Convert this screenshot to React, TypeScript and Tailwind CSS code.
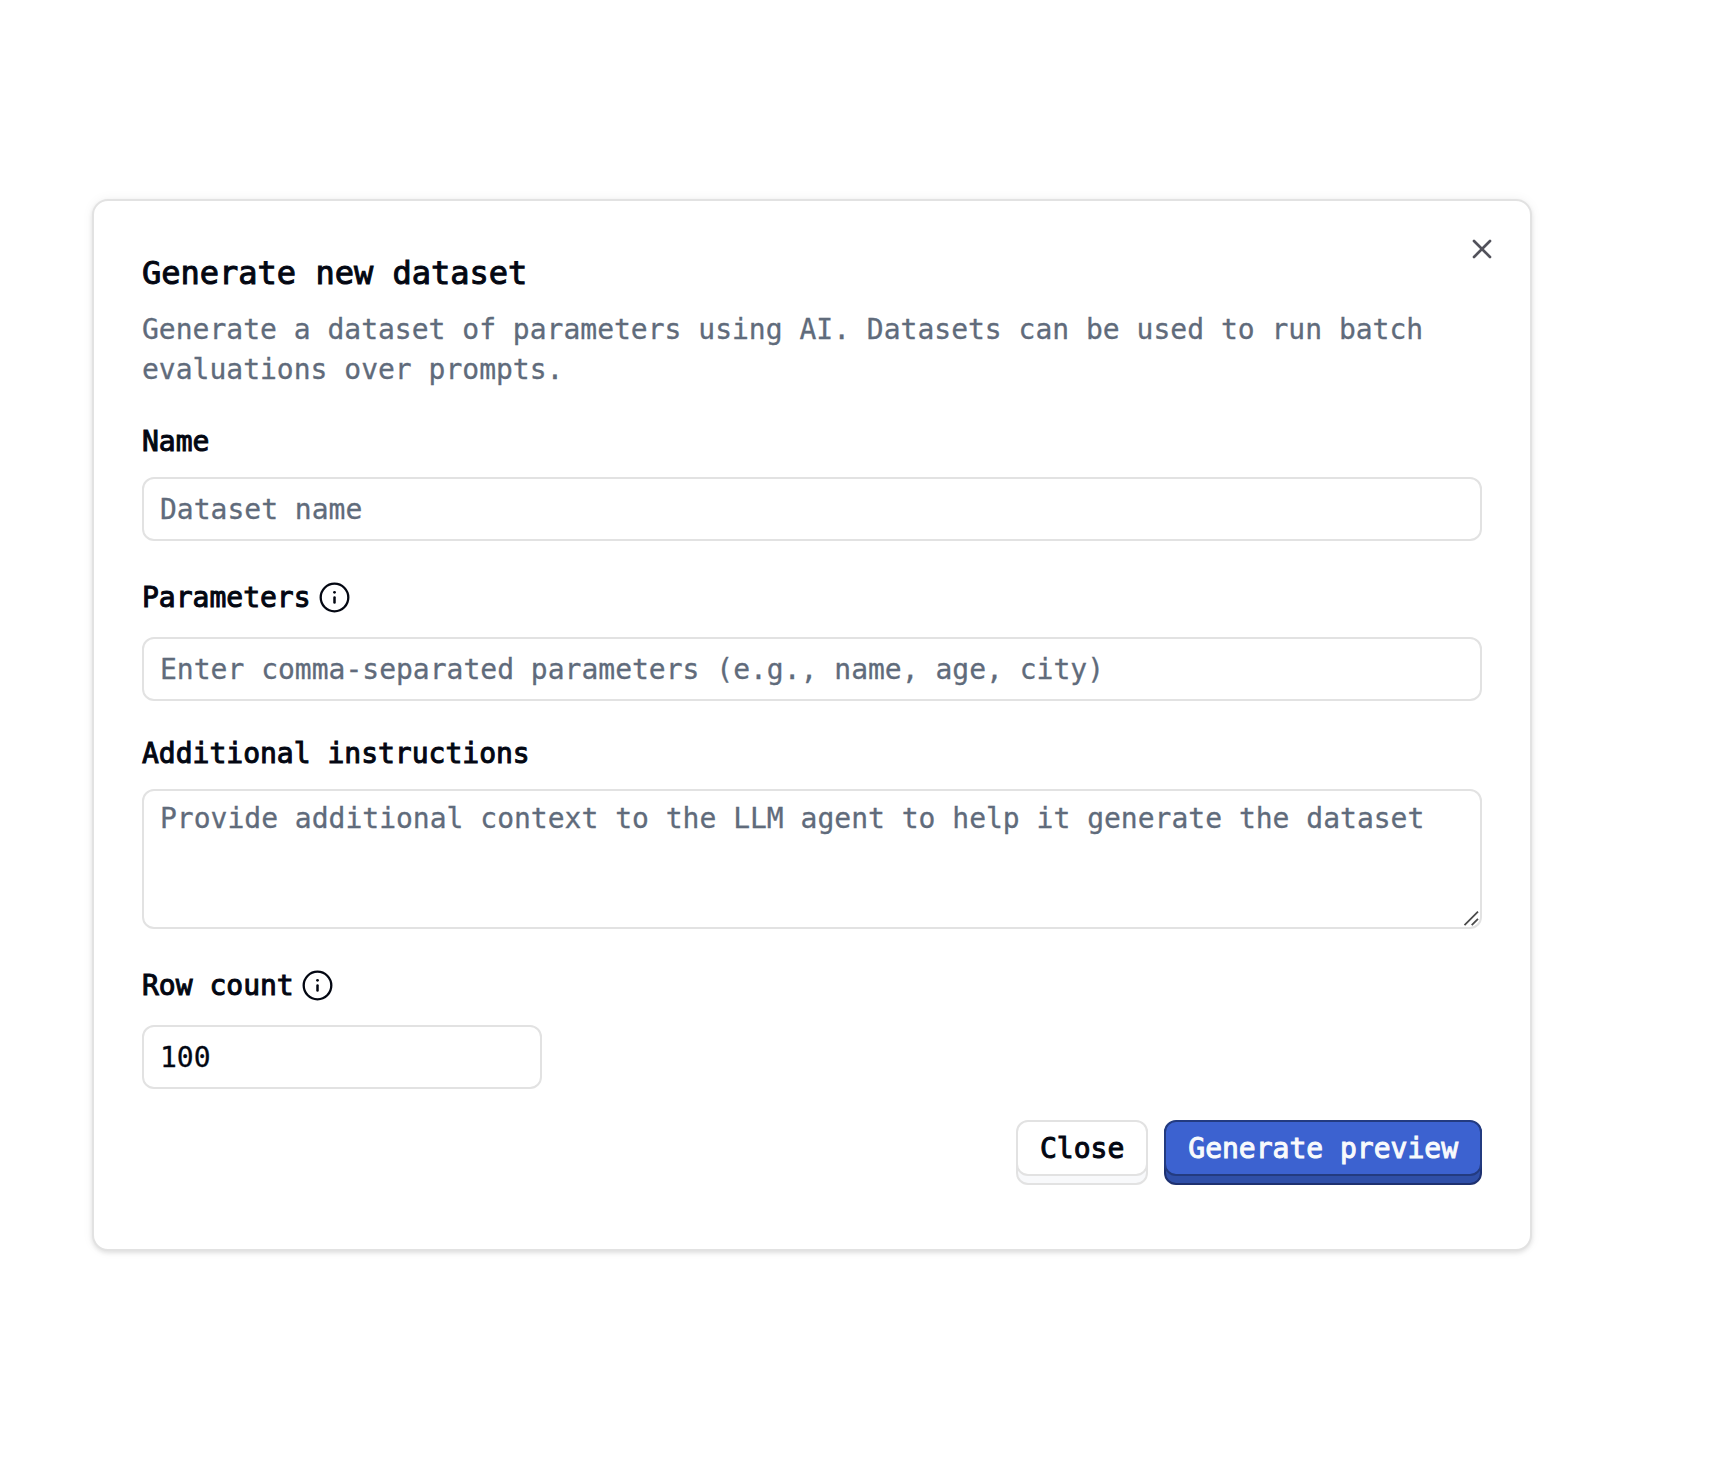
import type { ReactNode } from "react";
import { X } from "lucide-react";

const fieldClass =
  "block w-full rounded-xl border-2 border-[#e2e2e2] bg-white px-4 text-[28px] text-[#030712] placeholder:text-[#606b7b] placeholder:opacity-100 outline-none";

function InfoIcon() {
  return (
    <svg viewBox="0 0 32 32" className="h-8 w-8" fill="none" aria-hidden="true">
      <circle cx="15.5" cy="16.5" r="13.8" stroke="currentColor" strokeWidth="2.3" />
      <circle cx="15.5" cy="11.3" r="1.4" fill="currentColor" />
      <path d="M15.5 16.5V21.4" stroke="currentColor" strokeWidth="2.5" strokeLinecap="round" />
    </svg>
  );
}

function Label({ htmlFor, info, children }: { htmlFor: string; info?: boolean; children: ReactNode }) {
  const text = (
    <label htmlFor={htmlFor} className="block h-10 leading-[42px] [-webkit-text-stroke:1px_currentColor]">
      {children}
    </label>
  );
  if (!info) return text;
  return (
    <div className="flex h-12 items-center gap-2">
      {text}
      <button type="button" aria-label="More information">
        <InfoIcon />
      </button>
    </div>
  );
}

export default function App() {
  return (
    <main className="min-h-screen bg-white pt-[199px] pr-[178px] pb-12 pl-[92px] font-['DejaVu_Sans_Mono',monospace] text-[28px] text-[#030712] [-webkit-text-stroke:0.3px_currentColor]">
      <section
        role="dialog"
        aria-labelledby="dialog-title"
        className="relative w-full max-w-[1440px] rounded-2xl border-2 border-[#e2e2e2] bg-white px-12 pt-14 pb-16 shadow-[0_2px_4px_rgba(0,0,0,0.1),0_0_12px_rgba(0,0,0,0.05)]"
      >
        <button type="button" aria-label="Close dialog" className="absolute top-8 right-8 text-[#52525b]">
          <X size={32} strokeWidth={2} />
        </button>
        <h1 id="dialog-title" className="text-[32px] leading-8 [-webkit-text-stroke:1px_currentColor]">
          Generate new dataset
        </h1>
        <p className="mt-[21px] leading-10 text-[#606b7b]">
          Generate a dataset of parameters using AI. Datasets can be used to run batch evaluations over prompts.
        </p>
        <form className="mt-[31px] flex flex-col gap-8" onSubmit={(e) => e.preventDefault()}>
          <div className="flex flex-col gap-4">
            <Label htmlFor="name">Name</Label>
            <input id="name" type="text" placeholder="Dataset name" className={`${fieldClass} h-16`} />
          </div>
          <div className="flex flex-col gap-4">
            <Label htmlFor="parameters" info>
              Parameters
            </Label>
            <input
              id="parameters"
              type="text"
              placeholder="Enter comma-separated parameters (e.g., name, age, city)"
              className={`${fieldClass} h-16`}
            />
          </div>
          <div className="flex flex-col gap-4">
            <Label htmlFor="instructions">Additional instructions</Label>
            <div className="relative">
              <textarea
                id="instructions"
                placeholder="Provide additional context to the LLM agent to help it generate the dataset"
                className={`${fieldClass} h-[140px] resize-none py-2 leading-10`}
              />
              <svg
                viewBox="0 0 16 16"
                className="pointer-events-none absolute right-[3px] bottom-[3px] h-4 w-4"
                fill="none"
                stroke="#4b4b4b"
                strokeWidth="1.8"
                aria-hidden="true"
              >
                <path d="M1.5 15.2 15 1.7M8.7 15.2l6.3-6.3" />
              </svg>
            </div>
          </div>
          <div className="flex flex-col gap-4">
            <Label htmlFor="rows" info>
              Row count
            </Label>
            <div className="w-full max-w-[400px]">
              <input
                id="rows"
                type="number"
                defaultValue={100}
                className={`${fieldClass} h-16 [appearance:textfield] [&::-webkit-inner-spin-button]:appearance-none`}
              />
            </div>
          </div>
          <div className="flex justify-end gap-4">
            <button type="button" className="h-16 rounded-xl border-2 border-[#e2e2e2] bg-[#f8f9fb]">
              <span className="-mx-0.5 -mt-2.5 flex h-14 items-center rounded-xl border-2 border-[#e2e2e2] bg-white px-[22px] pt-0.5 [-webkit-text-stroke:1px_currentColor]">
                Close
              </span>
            </button>
            <button type="submit" className="h-16 rounded-xl border-2 border-[#1e3170] bg-[#2f4fa8] text-[#f8fafc]">
              <span className="-mx-0.5 -mt-2.5 flex h-14 items-center rounded-xl border-2 border-[#233b80] bg-[#3c62d0] px-[22px] pt-0.5 [-webkit-text-stroke:1px_currentColor]">
                Generate preview
              </span>
            </button>
          </div>
        </form>
      </section>
    </main>
  );
}
